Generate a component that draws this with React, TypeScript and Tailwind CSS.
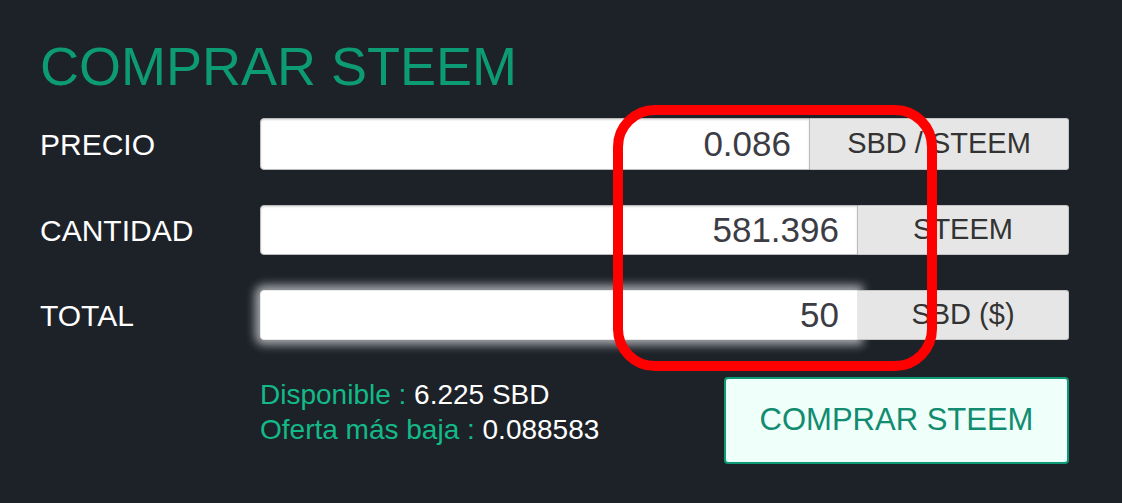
const rows = [
  { label: "PRECIO", value: "0.086", unit: "SBD / STEEM", unitW: "w-[259px]", h: "h-[52px]", focus: false },
  { label: "CANTIDAD", value: "581.396", unit: "STEEM", unitW: "w-[211px]", h: "h-[50px]", focus: false },
  { label: "TOTAL", value: "50", unit: "SBD ($)", unitW: "w-[211px]", h: "h-[50px]", focus: true },
];

export default function App() {
  return (
    <div className="relative w-full h-[503px] overflow-hidden bg-[#1d2229] pl-[40px] pr-[53px] pt-[38px] font-['Liberation_Sans',Arial,sans-serif]">
      <h1 className="text-[54px] leading-none h-[55px] pt-[1px] text-[#0c9b74] font-normal">COMPRAR STEEM</h1>

      <div className="mt-[25px] flex flex-col gap-[35px]">
        {rows.map((r) => (
          <div key={r.label} className={`flex items-stretch ${r.h}`}>
            <div className="w-[220px] flex items-center text-[30px] text-white">{r.label}</div>
            <div
              className={`flex-1 flex items-center justify-end pr-[18px] bg-white border rounded-l-[4px] text-[35px] text-[#3c3c44] ${
                r.focus
                  ? "border-[#e8e8e8] shadow-[0_0_10px_5px_rgba(255,255,255,0.6)]"
                  : "border-[#bbb] shadow-[inset_0_1px_2px_rgba(0,0,0,0.15)]"
              }`}
            >
              {r.value}
            </div>
            <div
              className={`${r.unitW} flex items-center justify-center bg-[#e6e6e6] border border-l-0 border-[#c4c4c4] rounded-r-[3px] text-[29px] text-[#333]`}
            >
              {r.unit}
            </div>
          </div>
        ))}
      </div>

      <div className="mt-[37px] pl-[220px] flex justify-between items-start">
        <div className="text-[28px] leading-[35px]">
          <div>
            <span className="text-[#14b988]">Disponible : </span>
            <span className="text-white">6.225 SBD</span>
          </div>
          <div>
            <span className="text-[#14b988]">Oferta más baja : </span>
            <span className="text-white">0.088583</span>
          </div>
        </div>
        <button className="w-[345px] h-[87px] flex items-center justify-center bg-[#effffa] border-2 border-[#0d9a74] rounded-[4px] text-[31px] text-[#118c70]">
          COMPRAR STEEM
        </button>
      </div>

      <div className="absolute left-[613px] top-[105px] w-[324px] h-[266px] border-[10px] border-[#ff0000] rounded-[42px] pointer-events-none" />
    </div>
  );
}
